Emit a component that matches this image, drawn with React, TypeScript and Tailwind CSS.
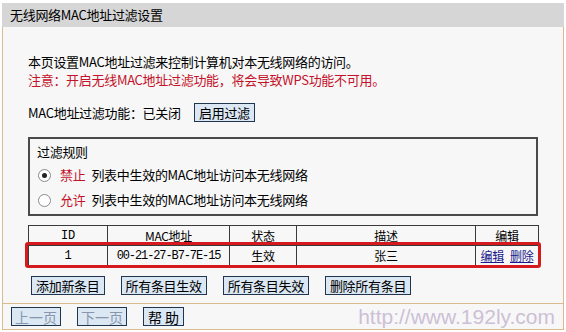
const cjk = { fontFamily: '"Noto Sans CJK SC", "Liberation Sans", sans-serif' }
const mono = { fontFamily: '"Liberation Mono", "DejaVu Sans Mono", monospace' }

function Btn({ children, disabled, className = '' }: { children: React.ReactNode; disabled?: boolean; className?: string }) {
  return (
    <button
      className={`h-[19px] px-[4px] border border-[#1f3550] bg-[#dbe7f3] text-[13px] leading-none whitespace-nowrap flex items-center justify-center ${disabled ? 'text-[#8697ad]' : 'text-black'} ${className}`}
    >
      {children}
    </button>
  )
}

function Radio({ checked }: { checked?: boolean }) {
  return (
    <span className="w-[13px] h-[13px] rounded-full border border-[#8a8a8a] bg-white flex items-center justify-center shrink-0">
      {checked && <span className="w-[5px] h-[5px] rounded-full bg-[#222]" />}
    </span>
  )
}

export default function App() {
  return (
    <div className="w-[566px] h-[332px] bg-white pt-[3px] px-[2px] text-black overflow-hidden" style={cjk}>
      <div className="h-[24px] bg-[#d6d6d6] flex items-center pl-[8px] text-[13px] tracking-[-0.3px]">
        无线网络MAC地址过滤设置
      </div>

      <div className="h-[276px] border-x border-[#d9bb8f] bg-[#f7f7f7] pl-[25px] pt-[26px] text-[13px] tracking-[-0.3px]">
        <div className="leading-[18px]">本页设置MAC地址过滤来控制计算机对本无线网络的访问。</div>
        <div className="leading-[18px] text-[#c4122a]">注意：开启无线MAC地址过滤功能，将会导致WPS功能不可用。</div>

        <div className="mt-[14px] h-[19px] flex items-center">
          <span className="w-[166px]">MAC地址过滤功能：已关闭</span>
          <Btn>启用过滤</Btn>
        </div>

        <div className="mt-[15px] w-[510px] h-[79px] border-2 border-[#4a4a4a] pl-[7px] pt-[4px]">
          <div className="leading-[18px]">过滤规则</div>
          <div className="mt-[3px] h-[22px] flex items-center gap-[9px] pl-[1px]">
            <Radio checked />
            <span>
              <span className="text-[#c4122a]">禁止</span>
              <span className="ml-[6px]">列表中生效的MAC地址访问本无线网络</span>
            </span>
          </div>
          <div className="mt-[3px] h-[22px] flex items-center gap-[9px] pl-[1px]">
            <Radio />
            <span>
              <span className="text-[#c4122a]">允许</span>
              <span className="ml-[6px]">列表中生效的MAC地址访问本无线网络</span>
            </span>
          </div>
        </div>

        <div className="relative mt-[9px] w-[510px]">
          <table className="w-[510px] border-collapse text-[12px] table-fixed">
            <colgroup>
              <col className="w-[79px]" />
              <col className="w-[122px]" />
              <col className="w-[67px]" />
              <col className="w-[179px]" />
              <col className="w-[63px]" />
            </colgroup>
            <thead>
              <tr className="h-[20px] leading-[18px]">
                <th className="border border-[#3a3a3a] font-normal" style={mono}>ID</th>
                <th className="border border-[#3a3a3a] font-normal">MAC地址</th>
                <th className="border border-[#3a3a3a] font-normal">状态</th>
                <th className="border border-[#3a3a3a] font-normal">描述</th>
                <th className="border border-[#3a3a3a] font-normal">编辑</th>
              </tr>
            </thead>
            <tbody>
              <tr className="h-[20px] leading-[18px] text-center">
                <td className="border border-[#3a3a3a]" style={mono}>1</td>
                <td className="border border-[#3a3a3a] whitespace-nowrap text-[12px] tracking-[-1.1px]" style={mono}>00-21-27-B7-7E-15</td>
                <td className="border border-[#3a3a3a]">生效</td>
                <td className="border border-[#3a3a3a]">张三</td>
                <td className="border border-[#3a3a3a] whitespace-nowrap">
                  <a className="text-[#1a1a8c] underline">编辑</a>
                  <a className="ml-[6px] text-[#1a1a8c] underline">删除</a>
                </td>
              </tr>
            </tbody>
          </table>
          <div className="absolute left-[-3px] right-[-3px] top-[17px] h-[26px] border-[3px] border-[#d41a1f] rounded-[3px] pointer-events-none" />
        </div>

        <div className="mt-[10px] flex items-center gap-[16px] pl-[3px]">
          <Btn>添加新条目</Btn>
          <Btn>所有条目生效</Btn>
          <Btn>所有条目失效</Btn>
          <Btn>删除所有条目</Btn>
        </div>
      </div>

      <div className="h-[27px] border border-[#d9bb8f] bg-[#f7f7f7] flex items-center pl-[8px] pr-[8px] gap-[16px]">
        <Btn disabled className="w-[50px] h-[18px] !px-0 !text-[14px]">上一页</Btn>
        <Btn disabled className="w-[50px] h-[18px] !px-0 !text-[14px]">下一页</Btn>
        <Btn className="w-[41px] h-[18px] !px-0 !text-[14px]">帮 助</Btn>
        <span className="ml-auto text-[21px] leading-none text-[#cdbfd6]" style={{ fontFamily: '"Liberation Sans", sans-serif' }}>
          http://www.192ly.com
        </span>
      </div>
    </div>
  )
}
